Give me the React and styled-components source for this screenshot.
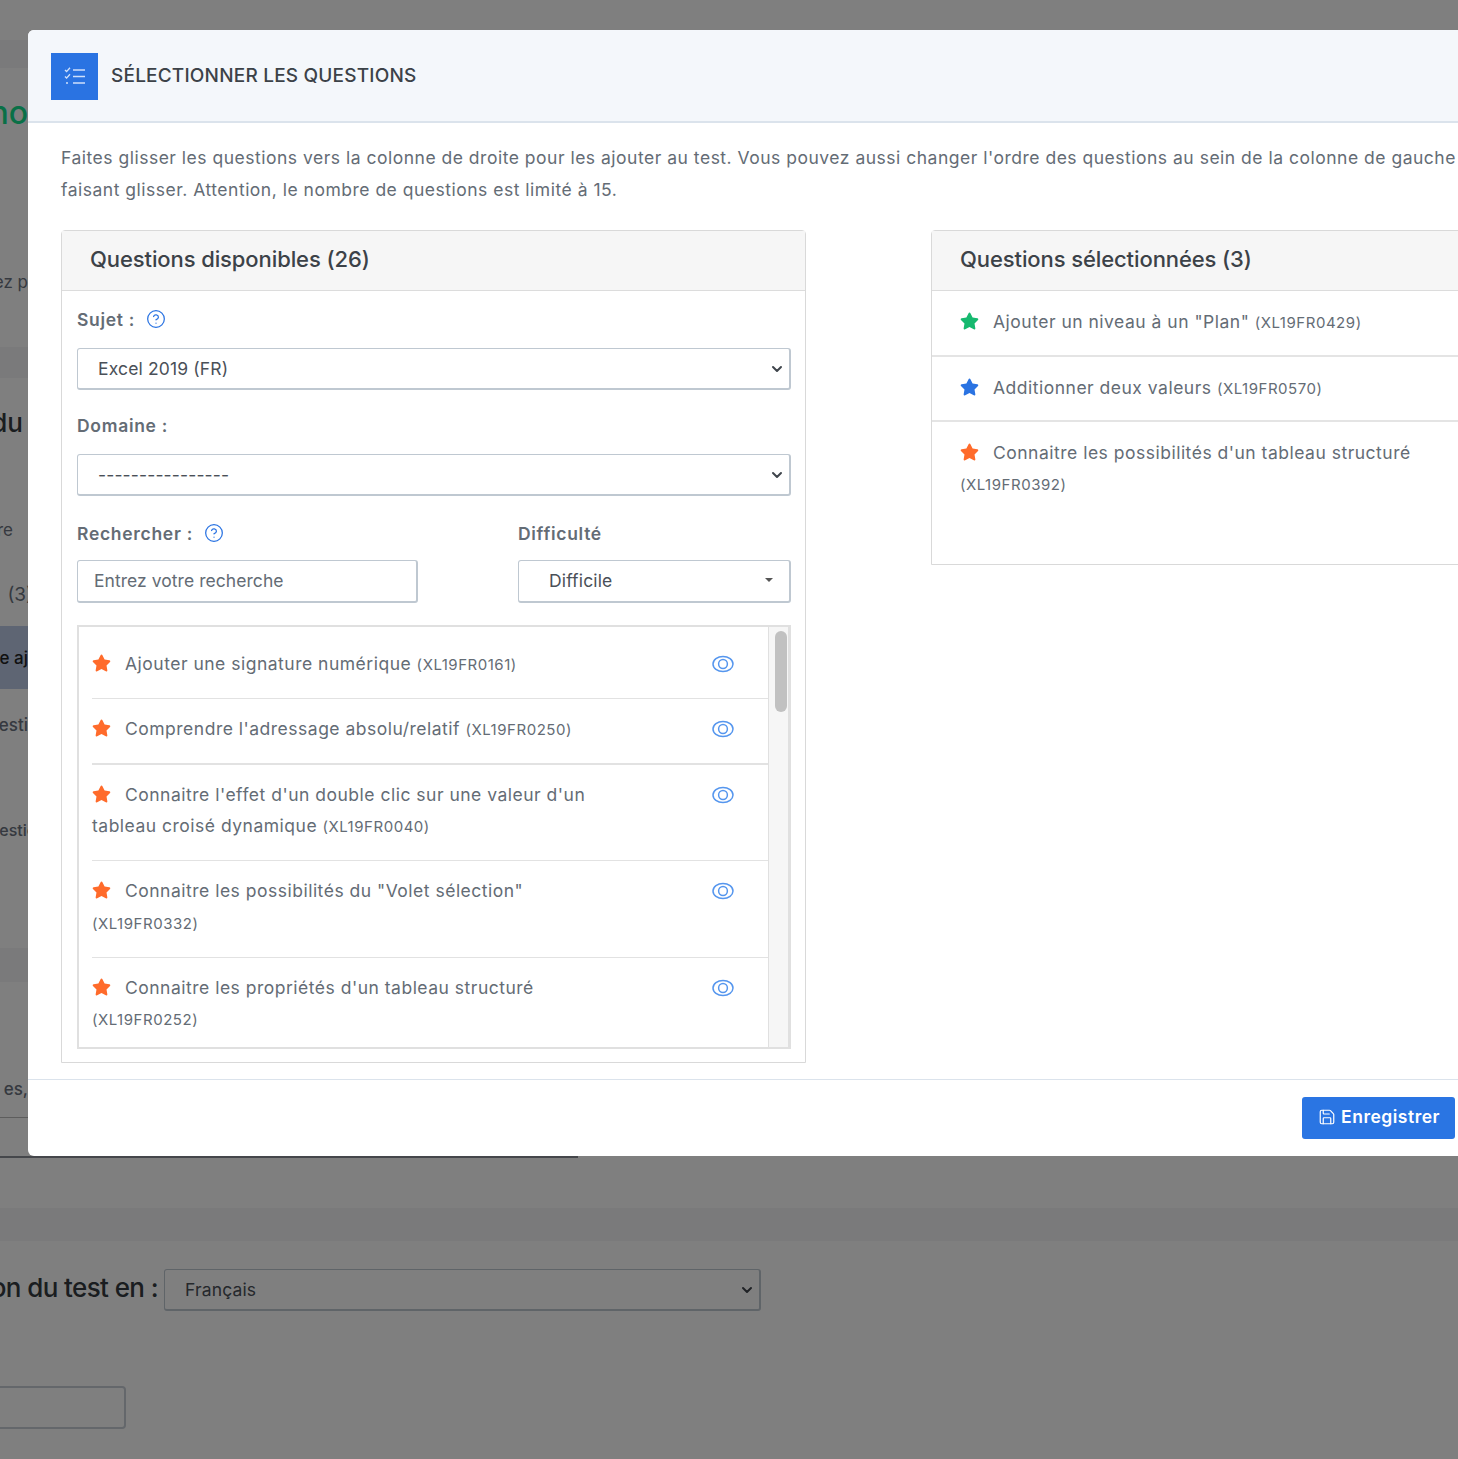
import React from "react";
import styled, { createGlobalStyle } from "styled-components";
import { FaStar } from "react-icons/fa";
import { ChevronDown, CircleHelp, Save } from "lucide-react";

const FONT = `Inter, "Liberation Sans", Arial, sans-serif`;

const Global = createGlobalStyle`
  html, body { margin: 0; height: 100%; overflow: hidden; background: #fff; }
  * { box-sizing: border-box; }
  body { font-family: ${FONT}; }
`;

/* page behind the modal */
const Page = styled.div`
  display: flex;
  flex-direction: column;
  height: 1459px;
  padding-top: 40px;
  overflow: hidden;
`;
const Band = styled.div`
  height: ${(p) => p.$height}px;
  margin-top: ${(p) => p.$gap || 0}px;
  background: #f4f5f7;
  flex-shrink: 0;
`;
const Fragment = styled.div`
  display: flex;
  justify-content: flex-end;
  width: ${(p) => p.$width || 28}px;
  height: 40px;
  line-height: 40px;
  margin-top: ${(p) => p.$gap}px;
  font-size: ${(p) => p.$size || 17}px;
  font-weight: ${(p) => p.$weight || 400};
  color: ${(p) => p.$color || "#6b7280"};
  white-space: nowrap;
  overflow: hidden;
  flex-shrink: 0;
`;
const ActiveRow = styled.div`
  display: flex;
  align-items: center;
  justify-content: flex-end;
  width: 28px;
  height: 63px;
  margin-top: 11px;
  background: #bccbe6;
  color: #222;
  font-size: 17px;
  font-weight: 500;
  white-space: nowrap;
  overflow: hidden;
  flex-shrink: 0;
`;
const TableEdge = styled.div`
  width: 578px;
  height: 41px;
  margin-top: 8px;
  border-top: 1px solid #bbb;
  border-bottom: 2px solid #8a8f96;
  flex-shrink: 0;
`;
const LangRow = styled.div`
  display: flex;
  align-items: center;
  gap: 6px;
  margin-top: 28px;
  flex-shrink: 0;
`;
const LangLabel = styled.div`
  display: flex;
  justify-content: flex-end;
  width: 158px;
  padding-bottom: 6px;
  overflow: hidden;
  white-space: nowrap;
  font-size: 26px;
  font-weight: 500;
  letter-spacing: -0.6px;
  color: #343a40;
`;
const PageInput = styled.div`
  width: 126px;
  height: 43px;
  margin-top: 75px;
  border: 2px solid #c8ced6;
  border-left: 0;
  border-radius: 0 4px 4px 0;
  flex-shrink: 0;
`;

const Backdrop = styled.div`
  position: fixed;
  inset: 0;
  background: rgba(0, 0, 0, 0.5);
`;

/* modal */
const Modal = styled.div`
  position: fixed;
  left: 28px;
  top: 30px;
  width: 1536px;
  background: #fff;
  border-radius: 6px;
  overflow: hidden;
`;
const ModalHeader = styled.div`
  display: flex;
  align-items: center;
  gap: 13px;
  height: 93px;
  padding: 0 0 1px 23px;
  background: #f4f7fb;
  border-bottom: 2px solid #dbe3ec;
`;
const HeaderIcon = styled.div`
  display: flex;
  align-items: center;
  justify-content: center;
  width: 47px;
  height: 47px;
  margin-top: 2px;
  background: #2a73e2;
`;
const ModalTitle = styled.h5`
  margin: 0;
  font-size: 19px;
  font-weight: 500;
  letter-spacing: 0.2px;
  color: #3c4248;
  text-transform: uppercase;
`;
const ModalBody = styled.div`
  padding: 19px 33px 16px;
`;
const Intro = styled.p`
  margin: 0 0 24px;
  font-size: 17.5px;
  line-height: 32px;
  letter-spacing: 0.505px;
  color: #646c75;
`;
const Columns = styled.div`
  display: grid;
  grid-template-columns: 745px 600px;
  column-gap: 125px;
  align-items: start;
`;
const Panel = styled.section`
  border: 1px solid #d9d9d9;
  border-radius: 4px 4px 0 0;
`;
const PanelHeader = styled.div`
  height: 60px;
  padding-left: 28px;
  line-height: 57px;
  background: #f6f6f6;
  border-bottom: 1px solid #dcdcdc;
  font-size: 22px;
  font-weight: 500;
  letter-spacing: -0.1px;
  color: #3c4248;
`;
const PanelBody = styled.div`
  padding: 12px 14px 13px 15px;
`;
const Label = styled.div`
  display: flex;
  align-items: center;
  gap: 11px;
  height: 32px;
  margin: ${(p) => p.$top || 0}px 0 ${(p) => p.$bottom || 13}px;
  font-size: 17.5px;
  font-weight: 600;
  letter-spacing: 0.7px;
  color: #646c75;
  svg { color: #2a73e2; }
`;
const SelectWrap = styled.div`
  position: relative;
  width: ${(p) => (p.$width ? `${p.$width}px` : "100%")};
  svg {
    position: absolute;
    top: 13px;
    right: 6px;
    color: #3f454c;
    pointer-events: none;
  }
`;
const Select = styled.select`
  display: block;
  width: 100%;
  height: 42px;
  padding: 0 28px 0 20px;
  appearance: none;
  background: #fff;
  border: 1px solid #bfc8d1;
  border-right-width: 2px;
  border-bottom-width: 2px;
  border-radius: 3px;
  font-family: ${FONT};
  font-size: 17.5px;
  letter-spacing: 0.15px;
  color: #4a5058;
`;
const SearchGrid = styled.div`
  display: grid;
  grid-template-columns: 341px 1fr;
  column-gap: 100px;
  margin-top: 21px;
`;
const SearchInput = styled.input`
  display: block;
  width: 100%;
  height: 43px;
  padding: 0 16px 2px;
  border: 1px solid #bfc8d1;
  border-right-width: 2px;
  border-bottom-width: 2px;
  border-radius: 3px;
  font-family: ${FONT};
  font-size: 17.5px;
  letter-spacing: 0.05px;
  &::placeholder { color: #646c75; opacity: 1; }
`;
const Dropdown = styled.button`
  display: flex;
  align-items: center;
  justify-content: space-between;
  width: 100%;
  height: 43px;
  padding: 0 16px 2px 30px;
  background: #fff;
  border: 1px solid #bfc8d1;
  border-right-width: 2px;
  border-bottom-width: 2px;
  border-radius: 3px;
  font-family: ${FONT};
  font-size: 17.5px;
  letter-spacing: 0.15px;
  color: #4a5058;
`;
const Caret = styled.span`
  width: 0;
  height: 0;
  border-left: 4px solid transparent;
  border-right: 4px solid transparent;
  border-top: 4px solid #555;
`;
const ListBox = styled.div`
  display: flex;
  height: 424px;
  margin-top: 22px;
  border: 2px solid #e0e0e0;
  border-right-width: 3px;
  overflow: hidden;
`;
const ListScroll = styled.div`
  flex: 1;
  padding: 7px 0 0 13px;
  overflow: hidden;
`;
const Rail = styled.div`
  width: 20px;
  padding: 4px 2px 0 6px;
  background: #f6f6f6;
  border-left: 1px solid #e0e0e0;
`;
const Thumb = styled.div`
  width: 12px;
  height: 81px;
  background: #c1c1c1;
  border-radius: 6px;
`;
const Item = styled.div`
  display: flex;
  align-items: flex-start;
  justify-content: space-between;
  padding: 14px 34px 17.5px 0;
  border-bottom: ${(p) => (p.$thick ? 2 : 1)}px solid #e2e2e2;
  &:first-child { padding-bottom: 17px; }
  &:last-child { border-bottom: 0; }
`;
const QuestionText = styled.div`
  width: ${(p) => p.$width || 525}px;
  font-size: 17.5px;
  line-height: 31.5px;
  letter-spacing: 0.5px;
  color: #646c75;
`;
const StarIcon = styled(FaStar)`
  display: inline-block;
  width: 19px;
  height: 18px;
  margin-right: 14px;
  vertical-align: -2px;
  color: ${(p) => p.$color};
`;
const Code = styled.span`
  font-size: 15px;
  white-space: nowrap;
  letter-spacing: 0.53px;
`;
const EyeIcon = styled.svg`
  width: 22px;
  height: 18px;
  margin-top: 7px;
  color: #5596ee;
  flex-shrink: 0;
`;
const SelectedItem = styled.div`
  padding: ${(p) => (p.$last ? "14.5px 28px 63px" : "15px 28px 16px")};
  border-bottom: ${(p) => (p.$last ? 0 : 2)}px solid #e4e4e4;
`;
const ModalFooter = styled.div`
  display: flex;
  justify-content: flex-end;
  padding: 17px 109px 17px 0;
  border-top: 1px solid #dbe3ec;
`;
const SaveButton = styled.button`
  display: flex;
  align-items: center;
  gap: 5px;
  height: 42px;
  padding: 0 15px 3px 16px;
  background: #2a75e3;
  border: 0;
  border-radius: 3px;
  font-family: ${FONT};
  font-size: 17.5px;
  font-weight: 600;
  letter-spacing: 0.5px;
  color: #fff;
`;

const RANK = { hard: "#ff6b2b", easy: "#16b96f", medium: "#2a73e2" };

const available = [
  { title: "Ajouter une signature numérique", code: "XL19FR0161" },
  { title: "Comprendre l'adressage absolu/relatif", code: "XL19FR0250", thick: true },
  { title: "Connaitre l'effet d'un double clic sur une valeur d'un tableau croisé dynamique", code: "XL19FR0040" },
  { title: 'Connaitre les possibilités du "Volet sélection"', code: "XL19FR0332" },
  { title: "Connaitre les propriétés d'un tableau structuré", code: "XL19FR0252" },
];

const selected = [
  { title: 'Ajouter un niveau à un "Plan"', code: "XL19FR0429", rank: "easy" },
  { title: "Additionner deux valeurs", code: "XL19FR0570", rank: "medium" },
  { title: "Connaitre les possibilités d'un tableau structuré", code: "XL19FR0392", rank: "hard" },
];

const Eye = () => (
  <EyeIcon viewBox="0 0 22 18" fill="none" stroke="currentColor" strokeWidth="1.5">
    <ellipse cx="11" cy="9" rx="10" ry="7.5" />
    <circle cx="11" cy="9" r="4.4" />
  </EyeIcon>
);

const ChecklistIcon = () => (
  <svg width="22" height="18" viewBox="0 0 22 18" fill="none" stroke="#cfe0fb" strokeWidth="1.6">
    <path d="M9 3h12M9 9.5h12M9 16h12" />
    <path d="M1 3l1.6 1.6L6 .8M1 9.5l1.6 1.6L6 7.3" strokeWidth="1.4" />
    <path d="M2 16h2" />
  </svg>
);

const Dropdownish = ({ width, value, label }) => (
  <SelectWrap $width={width}>
    <Select defaultValue={value}>
      <option value={value}>{label}</option>
    </Select>
    <ChevronDown size={16} strokeWidth={3} />
  </SelectWrap>
);

const App = () => {
  return (
    <>
      <Global />
      <Page>
        <Band $height={28} />
        <Fragment $gap={25} $size={32} $weight={500} $color="#12e08e">no</Fragment>
        <Fragment $gap={129}>ez p</Fragment>
        <Band $height={31} $gap={45} />
        <Fragment $gap={25} $width={23} $size={26} $weight={500} $color="#343a40">du</Fragment>
        <Fragment $gap={67} $width={13}>re</Fragment>
        <Fragment $gap={25} $width={33} $size={19}>(3)</Fragment>
        <ActiveRow>e aj</ActiveRow>
        <Fragment $gap={16} $weight={500}>esti</Fragment>
        <Fragment $gap={65} $width={36} $size={16} $weight={500}>estic</Fragment>
        <Band $height={34} $gap={98} />
        <Fragment $gap={87} $weight={500}>es,</Fragment>
        <TableEdge />
        <Band $height={33} $gap={50} />
        <LangRow>
          <LangLabel>on du test en :</LangLabel>
          <Dropdownish width={597} value="fr" label="Français" />
        </LangRow>
        <PageInput />
      </Page>
      <Backdrop />
      <Modal>
        <ModalHeader>
          <HeaderIcon><ChecklistIcon /></HeaderIcon>
          <ModalTitle>Sélectionner les questions</ModalTitle>
        </ModalHeader>
        <ModalBody>
          <Intro>
            Faites glisser les questions vers la colonne de droite pour les ajouter au test. Vous pouvez aussi changer
            l'ordre des questions au sein de la colonne de gauche en les faisant glisser. Attention, le nombre de
            questions est limité à 15.
          </Intro>
          <Columns>
            <Panel>
              <PanelHeader>Questions disponibles (26)</PanelHeader>
              <PanelBody>
                <Label>Sujet : <CircleHelp size={20} strokeWidth={1.5} /></Label>
                <Dropdownish value="xl19" label="Excel 2019 (FR)" />
                <Label $top={19}>Domaine :</Label>
                <Dropdownish value="" label="----------------" />
                <SearchGrid>
                  <div>
                    <Label $bottom={11}>Rechercher : <CircleHelp size={20} strokeWidth={1.5} /></Label>
                    <SearchInput placeholder="Entrez votre recherche" />
                  </div>
                  <div>
                    <Label $bottom={11}>Difficulté</Label>
                    <Dropdown>Difficile <Caret /></Dropdown>
                  </div>
                </SearchGrid>
                <ListBox>
                  <ListScroll>
                    {available.map((q) => (
                      <Item key={q.code} $thick={q.thick}>
                        <QuestionText>
                          <StarIcon $color={RANK.hard} />
                          {q.title} <Code>({q.code})</Code>
                        </QuestionText>
                        <Eye />
                      </Item>
                    ))}
                  </ListScroll>
                  <Rail><Thumb /></Rail>
                </ListBox>
              </PanelBody>
            </Panel>
            <Panel>
              <PanelHeader>Questions sélectionnées (3)</PanelHeader>
              {selected.map((q, i) => (
                <SelectedItem key={q.code} $last={i === selected.length - 1}>
                  <QuestionText $width={542}>
                    <StarIcon $color={RANK[q.rank]} />
                    {q.title} <Code>({q.code})</Code>
                  </QuestionText>
                </SelectedItem>
              ))}
            </Panel>
          </Columns>
        </ModalBody>
        <ModalFooter>
          <SaveButton><Save size={18} strokeWidth={1.6} /> Enregistrer</SaveButton>
        </ModalFooter>
      </Modal>
    </>
  );
};

export default App;
